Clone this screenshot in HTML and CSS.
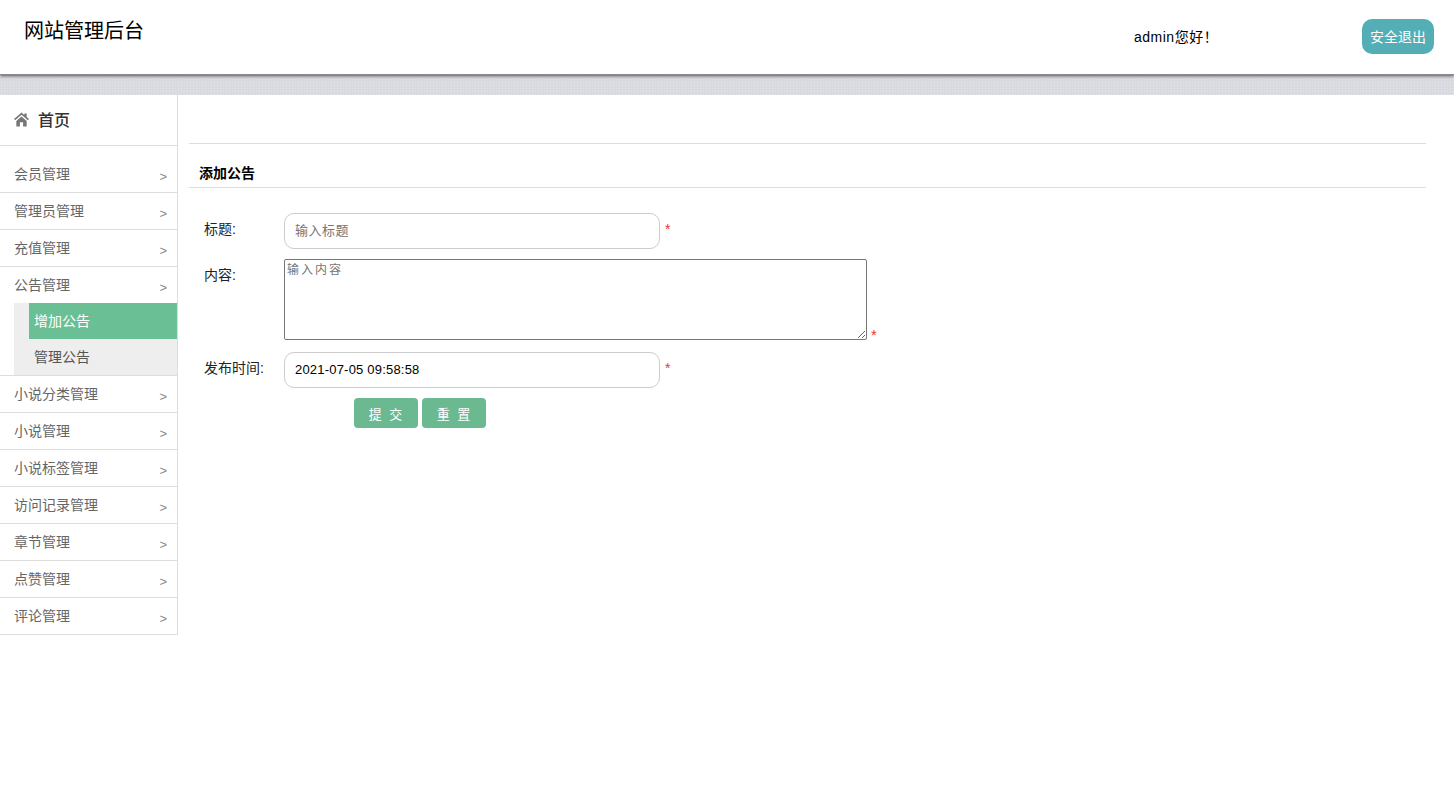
FILE: index.html
```html
<!DOCTYPE html>
<html lang="zh-CN">
<head>
<meta charset="utf-8">
<title>网站管理后台</title>
<link rel="stylesheet" href="styles.css">
</head>
<body>
<header class="topbar">
  <h1 class="brand">网站管理后台</h1>
  <div class="welcome">admin您好！</div>
  <a class="logout">安全退出</a>
</header>
<div class="band"></div>
<div class="layout">
  <aside class="sidebar">
    <div class="home">
      <svg class="home-icon" viewBox="0 0 16 15" width="15" height="15"><path fill="#777" d="M8 0 L11 2.600 V1 H13.500 V4.800 L16 7 L14.800 8.400 L8 2.500 L1.200 8.400 L0 7 Z M2.500 9 L8 4.200 L13.500 9 V15 H9.700 V10.500 H6.300 V15 H2.500 Z"/></svg>
      <span>首页</span>
    </div>
    <ul class="menu">
      <li class="item"><span>会员管理</span><i>&gt;</i></li>
      <li class="item"><span>管理员管理</span><i>&gt;</i></li>
      <li class="item"><span>充值管理</span><i>&gt;</i></li>
      <li class="item item-open"><span>公告管理</span><i>&gt;</i></li>
      <li class="sub">
        <div class="sub-item sub-active">增加公告</div>
        <div class="sub-item">管理公告</div>
      </li>
      <li class="item"><span>小说分类管理</span><i>&gt;</i></li>
      <li class="item"><span>小说管理</span><i>&gt;</i></li>
      <li class="item"><span>小说标签管理</span><i>&gt;</i></li>
      <li class="item"><span>访问记录管理</span><i>&gt;</i></li>
      <li class="item"><span>章节管理</span><i>&gt;</i></li>
      <li class="item"><span>点赞管理</span><i>&gt;</i></li>
      <li class="item"><span>评论管理</span><i>&gt;</i></li>
    </ul>
  </aside>
  <main class="content">
    <div class="crumbs"></div>
    <h2 class="title">添加公告</h2>
    <form class="form">
      <div class="row row-title">
        <label>标题:</label>
        <input class="field" type="text" placeholder="输入标题">
        <em>*</em>
      </div>
      <div class="row row-text">
        <label>内容:</label>
        <textarea class="area" placeholder="输入内容"></textarea>
        <em>*</em>
      </div>
      <div class="row row-time">
        <label>发布时间:</label>
        <input class="field" type="text" value="2021-07-05 09:58:58">
        <em>*</em>
      </div>
      <div class="actions">
        <button type="button" class="btn">提 交</button>
        <button type="button" class="btn">重 置</button>
      </div>
    </form>
  </main>
</div>
</body>
</html>
```

FILE: styles.css
```css
* { box-sizing: border-box; }
html, body { margin: 0; height: 100%; }
body {
  font-family: "Liberation Sans", "Noto Sans CJK SC", sans-serif;
  font-size: 14px;
  color: #000;
  background: #fff;
  overflow: hidden;
}
.topbar {
  height: 75px;
  display: flex;
  align-items: flex-start;
  background: #fff;
  border-bottom: 1px solid #8a8a8a;
  box-shadow: 0 1px 3px #555;
  position: relative;
}
.brand {
  margin: 17px 0 0 24px;
  font-size: 20px;
  font-weight: 400;
  line-height: 28px;
}
.welcome {
  margin: 27px 0 0 990px;
  line-height: 20px;
  width: 228px;
  letter-spacing: .5px;
}
.logout {
  width: 72px;
  height: 35px;
  margin-top: 19px;
  border-radius: 10px;
  background: #53aeb6;
  color: #fff;
  text-align: center;
  line-height: 36px;
}
.band {
  height: 20px;
  background-color: #d8dae0;
  background-image: radial-gradient(#e3e5e9 .6px, transparent .8px);
  background-size: 3px 3px;
}
.layout { display: flex; height: 716px; }
.sidebar { width: 178px; flex: none; }
.home {
  height: 51px;
  display: flex;
  align-items: center;
  gap: 9px;
  padding: 0 0 3px 14px;
  border-right: 1px solid #ddd;
  border-bottom: 1px solid #ddd;
  font-size: 16px;
  font-weight: 500;
  color: #333;
}
.home-icon { margin-top: 2px; }
.menu {
  list-style: none;
  margin: 0;
  padding: 10px 0 0;
  border-right: 1px solid #ddd;
  color: #666;
}
.item {
  height: 37px;
  display: flex;
  align-items: center;
  justify-content: space-between;
  padding: 0 10px 3px 14px;
  border-bottom: 1px solid #ddd;
}
.item i {
  font-style: normal;
  font-size: 13px;
  color: #888;
  margin-top: 7px;
}
.item-open { border-bottom: 0; height: 36px; padding-bottom: 2px; }
.sub {
  margin-left: 14px;
  background: #eee;
  height: 72px;
}
.sub + .item { border-top: 1px solid #ddd; height: 38px; padding-bottom: 2px; }
.sub-item {
  height: 36px;
  line-height: 37px;
  padding-left: 20px;
  color: #555;
}
.sub-active {
  margin-left: 15px;
  padding-left: 5px;
  background: #6bbf95;
  color: #fff;
}
.content {
  flex: 1;
  padding: 0 28px 0 11px;
}
.crumbs {
  height: 49px;
  border-bottom: 1px solid #ddd;
}
.title {
  margin: 0;
  height: 44px;
  padding: 21px 0 0 10px;
  border-bottom: 1px solid #ddd;
  font-size: 14px;
  font-weight: 700;
  line-height: 17px;
}
.form { padding: 25px 0 0; }
.row {
  display: flex;
  align-items: flex-start;
}
.row label {
  width: 80px;
  margin-left: 15px;
  font-size: 14px;
  line-height: 20px;
  color: #222;
}
.row em {
  font-style: normal;
  color: #e33;
  font-size: 14px;
  margin-left: 5px;
}
.row-title { height: 46px; }
.row-title label { margin-top: 6px; }
.row-title em, .row-time em { margin-top: 8px; }
.row-text { height: 93px; }
.row-text label { margin-top: 6px; }
.row-text em { margin-top: 67px; margin-left: 4px; font-size: 15px; }
.row-time { height: 46px; }
.row-time label { margin-top: 6px; }
.field {
  width: 376px;
  height: 36px;
  border: 1px solid #ccc;
  border-radius: 10px;
  padding: 0 10px 2px;
  font: 13px "Liberation Sans", "Noto Sans CJK SC", sans-serif;
  letter-spacing: .2px;
  color: #000;
  background: #fff;
}
.field::placeholder { color: #757575; letter-spacing: .5px; }
.area {
  width: 583px;
  height: 81px;
  border: 1px solid #767676;
  border-radius: 2px;
  padding: 5px 2px 2px;
  margin: 0;
  font: 12px/1.1 "Liberation Mono", "Noto Sans CJK SC", monospace;
  letter-spacing: 2px;
  resize: both;
}
.area::placeholder { color: #757575; }
.actions {
  display: flex;
  gap: 4px;
  padding-left: 165px;
}
.btn {
  width: 64px;
  height: 30px;
  padding: 0 0 0 1px;
  border: 0;
  border-radius: 4px;
  background: #6bb991;
  color: #fff;
  font: 13px "Liberation Sans", "Noto Sans CJK SC", sans-serif;
  letter-spacing: 2px;
  white-space: pre;
}
```
